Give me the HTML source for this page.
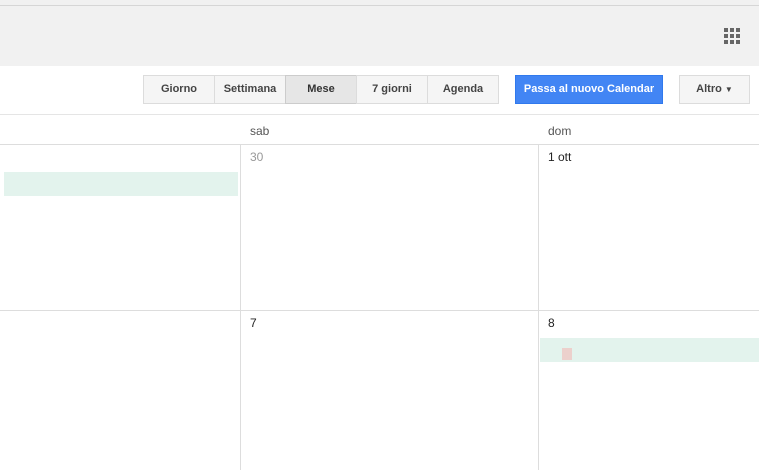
<!DOCTYPE html>
<html><head><style>
body{margin:0;width:759px;height:470px;overflow:hidden;background:#fff;font-family:"Liberation Sans",Arial,sans-serif;position:relative}
.a{position:absolute}
.btn{position:absolute;top:75px;height:29px;box-sizing:border-box;border:1px solid #dcdcdc;background:#f5f5f5;font-size:11px;font-weight:bold;color:#444;text-align:center;line-height:27px}
</style></head><body>
<div class="a" style="left:0;top:0;width:759px;height:5px;background:#f1f1f1"></div>
<div class="a" style="left:0;top:5px;width:759px;height:1px;background:#d6d6d6"></div>
<div class="a" style="left:0;top:6px;width:759px;height:60px;background:#f1f1f1"></div>
<svg class="a" style="left:724px;top:28px" width="16" height="16"><g fill="#666"><rect x="0" y="0" width="4" height="4"/><rect x="6" y="0" width="4" height="4"/><rect x="12" y="0" width="4" height="4"/><rect x="0" y="6" width="4" height="4"/><rect x="6" y="6" width="4" height="4"/><rect x="12" y="6" width="4" height="4"/><rect x="0" y="12" width="4" height="4"/><rect x="6" y="12" width="4" height="4"/><rect x="12" y="12" width="4" height="4"/></g></svg>
<div class="btn" style="left:143px;width:72px">Giorno</div>
<div class="btn" style="left:214px;width:72px">Settimana</div>
<div class="btn" style="left:285px;width:72px;background:#e6e6e6;border-color:#ccc;color:#333">Mese</div>
<div class="btn" style="left:356px;width:72px">7 giorni</div>
<div class="btn" style="left:427px;width:72px">Agenda</div>
<div class="btn" style="left:515px;width:148px;background:#4285f4;border-color:#3079ed;color:#fff">Passa al nuovo Calendar</div>
<div class="btn" style="left:679px;width:71px">Altro <span style="font-size:8px">▼</span></div>
<div class="a" style="left:0;top:114px;width:759px;height:1px;background:#e5e5e5"></div>
<div class="a" style="left:250px;top:124px;font-size:12px;color:#555">sab</div>
<div class="a" style="left:548px;top:124px;font-size:12px;color:#555">dom</div>
<div class="a" style="left:0;top:144px;width:759px;height:1px;background:#ddd"></div>
<div class="a" style="left:0;top:310px;width:759px;height:1px;background:#ddd"></div>
<div class="a" style="left:240px;top:144px;width:1px;height:326px;background:#ddd"></div>
<div class="a" style="left:538px;top:144px;width:1px;height:326px;background:#ddd"></div>
<div class="a" style="left:250px;top:150px;font-size:12px;color:#999">30</div>
<div class="a" style="left:548px;top:150px;font-size:12px;color:#222">1 ott</div>
<div class="a" style="left:250px;top:316px;font-size:12px;color:#222">7</div>
<div class="a" style="left:548px;top:316px;font-size:12px;color:#222">8</div>
<div class="a" style="left:4px;top:172px;width:234px;height:24px;background:#e3f3ed"></div>
<div class="a" style="left:540px;top:338px;width:219px;height:24px;background:#e3f3ed"></div>
<div class="a" style="left:562px;top:348px;width:10px;height:12px;background:#ecd0cc"></div>
</body></html>
